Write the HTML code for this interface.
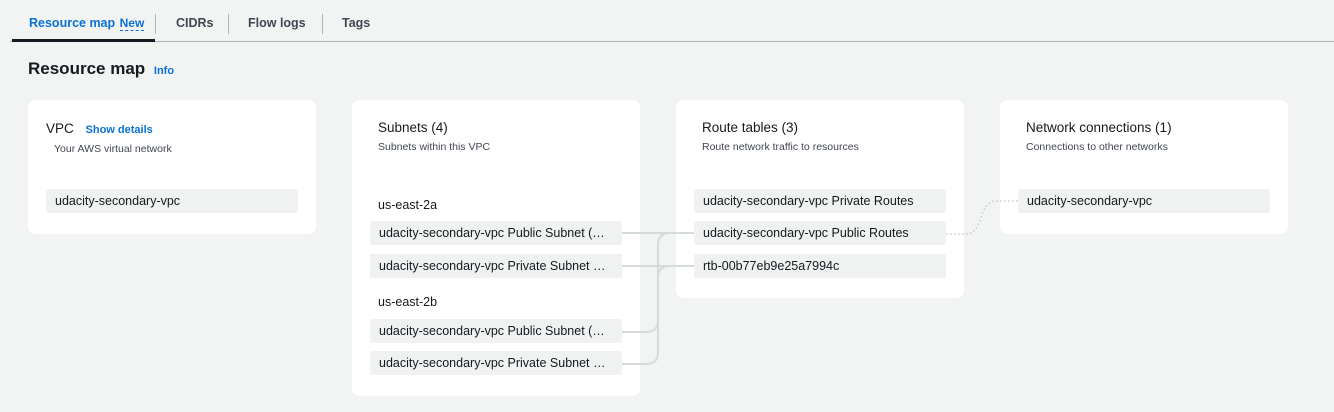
<!DOCTYPE html>
<html><head><meta charset="utf-8"><style>
*{box-sizing:border-box;margin:0;padding:0}
body{width:1334px;height:412px;background:#f2f3f3;font-family:"Liberation Sans",sans-serif;color:#16191f;position:relative;overflow:hidden}
.a{position:absolute;white-space:nowrap}
.tab{font-size:12.5px;font-weight:bold;color:#414750;top:16px}
.card{position:absolute;background:#fff;border-radius:8px}
.pill{position:absolute;background:#f0f1f1;border-radius:2px;height:24px;width:252px;font-size:12.5px;line-height:24px;padding-left:9px;color:#16191f;overflow:hidden}
.t{font-size:13.5px}
.s{font-size:10.5px;color:#414750}
</style></head><body>
<div class="a tab" style="left:29px;color:#0972d3">Resource map <span style="border-bottom:1px dashed #0972d3;font-size:12px;margin-left:1px">New</span></div>
<div class="a tab" style="left:176px">CIDRs</div>
<div class="a tab" style="left:248px">Flow logs</div>
<div class="a tab" style="left:342px">Tags</div>
<div class="a" style="left:155px;top:14px;width:1px;height:20px;background:#aab7b8"></div>
<div class="a" style="left:228px;top:14px;width:1px;height:20px;background:#aab7b8"></div>
<div class="a" style="left:322px;top:14px;width:1px;height:20px;background:#aab7b8"></div>
<div class="a" style="left:10px;top:41px;width:1324px;height:1px;background:#aab7b8"></div>
<div class="a" style="left:12px;top:39px;width:143px;height:3px;background:#16191f"></div>
<div class="a" style="left:28px;top:59px;font-size:17px;font-weight:bold">Resource map <span style="font-size:11px;color:#0972d3;margin-left:4px">Info</span></div>

<div class="card" style="left:28px;top:100px;width:288px;height:134px"></div>
<div class="card" style="left:352px;top:100px;width:288px;height:296px"></div>
<div class="card" style="left:676px;top:100px;width:288px;height:198px"></div>
<div class="card" style="left:1000px;top:100px;width:288px;height:134px"></div>

<div class="a t" style="left:46px;top:121px">VPC <span style="font-size:11px;font-weight:bold;color:#0972d3;margin-left:8px">Show details</span></div>
<div class="a s" style="left:54px;top:143px">Your AWS virtual network</div>
<div class="pill" style="left:46px;top:189px">udacity-secondary-vpc</div>

<div class="a t" style="left:378px;top:120px">Subnets (4)</div>
<div class="a s" style="left:378px;top:141px">Subnets within this VPC</div>
<div class="a" style="left:378px;top:198px;font-size:12.5px">us-east-2a</div>
<div class="pill" style="left:370px;top:221px">udacity-secondary-vpc Public Subnet (…</div>
<div class="pill" style="left:370px;top:254px">udacity-secondary-vpc Private Subnet …</div>
<div class="a" style="left:378px;top:295px;font-size:12.5px">us-east-2b</div>
<div class="pill" style="left:370px;top:319px">udacity-secondary-vpc Public Subnet (…</div>
<div class="pill" style="left:370px;top:351px">udacity-secondary-vpc Private Subnet …</div>

<div class="a t" style="left:702px;top:120px">Route tables (3)</div>
<div class="a s" style="left:702px;top:141px">Route network traffic to resources</div>
<div class="pill" style="left:694px;top:189px">udacity-secondary-vpc Private Routes</div>
<div class="pill" style="left:694px;top:221px">udacity-secondary-vpc Public Routes</div>
<div class="pill" style="left:694px;top:254px">rtb-00b77eb9e25a7994c</div>

<div class="a t" style="left:1026px;top:120px">Network connections (1)</div>
<div class="a s" style="left:1026px;top:141px">Connections to other networks</div>
<div class="pill" style="left:1018px;top:189px">udacity-secondary-vpc</div>

<svg class="a" style="left:0;top:0" width="1334" height="412">
<g fill="none" stroke="#d5dbdb" stroke-width="2">
<path d="M622 233H694"/><path d="M622 266H694"/>
<path d="M622 332H646Q658 332 658 320V245Q658 233 670 233H694"/>
<path d="M622 364H646Q658 364 658 352V278Q658 266 670 266H694"/>
</g>
<path d="M946 234H966C984 234 978 201 996 201H1018" fill="none" stroke="#c5cccc" stroke-width="1.5" stroke-dasharray="1.5 2.5"/>
</svg>
</body></html>
